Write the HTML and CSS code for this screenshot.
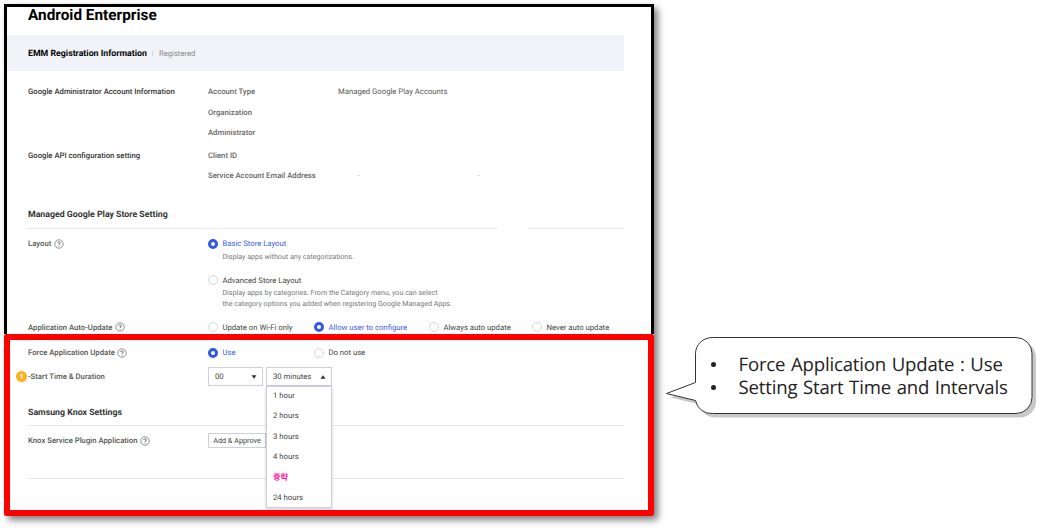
FILE: index.html
```html
<!DOCTYPE html>
<html lang="en">
<head>
<meta charset="utf-8">
<title>Android Enterprise</title>
<link rel="stylesheet" href="styles.css">
</head>
<body>
<svg width="0" height="0" class="defs" aria-hidden="true">
  <symbol id="help" viewBox="0 0 10 10">
    <circle cx="5" cy="5" r="4.2" fill="none" stroke="#666" stroke-width=".7"/>
    <path d="M3.7 4.1C3.7 2.4 6.3 2.4 6.3 4C6.3 4.9 5 4.9 5 6M5 6.8V7.6" fill="none" stroke="#555" stroke-width=".9"/>
  </symbol>
</svg>
<main class="page">
  <div class="panel">
    <section class="top">
      <h1>Android Enterprise</h1>
      <div class="band"><b>EMM Registration Information</b><i></i><span>Registered</span></div>
      <div class="row info first"><div class="label dark">Google Administrator Account Information</div><div class="sub">Account Type</div><div class="value">Managed Google Play Accounts</div></div>
      <div class="row info"><div class="label"></div><div class="sub">Organization</div></div>
      <div class="row info"><div class="label"></div><div class="sub">Administrator</div></div>
      <div class="row info api"><div class="label dark">Google API configuration setting</div><div class="sub">Client ID</div></div>
      <div class="row info"><div class="label"></div><div class="sub">Service Account Email Address</div><div class="marks"><i></i><i></i></div></div>
      <h2 class="store">Managed Google Play Store Setting</h2>
      <div class="rule split"><i></i><i></i></div>
      <div class="row layout">
        <div class="label">Layout<svg class="help"><use href="#help"/></svg></div>
        <div class="options">
          <div class="radio on"><i></i><span>Basic Store Layout</span></div>
          <p>Display apps without any categorizations.</p>
          <div class="radio advanced"><i></i><span>Advanced Store Layout</span></div>
          <p>Display apps by categories. From the Category menu, you can select<br>the category options you added when registering Google Managed Apps.</p>
        </div>
      </div>
      <div class="row auto">
        <div class="label">Application Auto-Update<svg class="help"><use href="#help"/></svg></div>
        <div class="radios">
          <div class="radio"><i></i><span>Update on Wi-Fi only</span></div>
          <div class="radio on"><i></i><span>Allow user to configure</span></div>
          <div class="radio"><i></i><span>Always auto update</span></div>
          <div class="radio"><i></i><span>Never auto update</span></div>
        </div>
      </div>
    </section>
    <section class="bottom">
      <div class="row force">
        <div class="label">Force Application Update<svg class="help"><use href="#help"/></svg></div>
        <div class="radios">
          <div class="radio on"><i></i><span>Use</span></div>
          <div class="radio"><i></i><span>Do not use</span></div>
        </div>
      </div>
      <div class="row start">
        <div class="label"><b class="badge">1</b>-Start Time &amp; Duration</div>
        <div class="select hour"><span>00</span><svg viewBox="0 0 6 4"><path d="M.5 .3H5.5L3 3.7Z"/></svg></div>
        <div class="select minutes"><span>30 minutes</span><svg viewBox="0 0 6 4"><path d="M.5 3.7H5.5L3 .3Z"/></svg>
          <ul class="menu"><li>1 hour</li><li>2 hours</li><li>3 hours</li><li>4 hours</li><li class="skip">중략</li><li class="last">24 hours</li></ul>
        </div>
      </div>
      <h2 class="knox">Samsung Knox Settings</h2>
      <div class="rule"><i></i></div>
      <div class="row plugin">
        <div class="label">Knox Service Plugin Application<svg class="help"><use href="#help"/></svg></div>
        <button>Add &amp; Approve</button>
      </div>
      <div class="rule"><i></i></div>
    </section>
  </div>
  <aside class="callout">
    <svg class="bubble" viewBox="0 0 374 84">
      <path class="shadow" transform="translate(4 4)" d="M46.5 .5H350A16 16 0 0 1 366 16.5V60.5A16 16 0 0 1 350 76.5H46.5A16 16 0 0 1 29.5 63.5L.5 56.5L29.5 45.5V16.5A17 16 0 0 1 46.5 .5Z"/>
      <path class="face" d="M46.5 .5H350A16 16 0 0 1 366 16.5V60.5A16 16 0 0 1 350 76.5H46.5A16 16 0 0 1 29.5 63.5L.5 56.5L29.5 45.5V16.5A17 16 0 0 1 46.5 .5Z"/>
    </svg>
    <ul><li>Force Application Update : Use</li><li>Setting Start Time and Intervals</li></ul>
  </aside>
</main>
</body>
</html>
```
FILE: styles.css
```css
* { box-sizing: border-box; }
body { margin: 0; background: #fff; font-family: Roboto, "Noto Sans CJK KR", sans-serif; font-size: 7.73px; color: #555; overflow: hidden; text-rendering: geometricPrecision; }
h1, h2, p, ul { margin: 0; padding: 0; }
ul { list-style: none; }
.defs { position: absolute; }
.page { display: flex; align-items: flex-start; width: 1038px; height: 529px; padding: 4px 0 0 4px; }

/* Settings panel */
.panel { width: 650px; height: 512px; flex: none; background: #fff; border-radius: 2px; box-shadow: 4px 4px 7px rgba(0,0,0,.5); }
.top { height: 330px; border: 3px solid #000; border-bottom: 0; overflow: hidden; white-space: nowrap; }
h1 { height: 28px; padding-left: 21px; font-size: 15.35px; line-height: 16px; font-weight: 700; color: #000; }
.band { display: flex; align-items: center; height: 36px; width: 617px; padding-left: 21px; background: #f2f3f8; font-size: 7.7px; color: #888; }
.band b { padding-top: 1px; font-size: 8.78px; font-weight: 700; color: #000; }
.band i { width: 1px; height: 5px; margin: 0 5.5px; background: #d5d6dc; }
.row { display: flex; align-items: center; padding-left: 21px; }
.label { display: flex; align-items: center; flex: none; width: 180px; font-weight: 500; }
.dark { color: #333; }
.help { width: 10px; height: 10px; margin-left: 2.5px; }
.info { height: 20.4px; }
.info.first { margin-top: 10.5px; }
.info.api { margin-top: 2.5px; }
.sub { width: 130px; font-weight: 500; color: #666; }
.marks { display: flex; gap: 117px; padding-left: 19px; }
.marks i { width: 3px; height: 1px; background: #e2e2e2; }
h2 { height: 14px; padding: 1px 0 0 21px; font-size: 8.78px; line-height: 14px; font-weight: 700; color: #333; }
.store { margin-top: 21px; }
.rule { display: flex; height: 1px; margin: 0 27px 0 21px; }
.rule i { flex: 1; background: #e8e8ea; }
.store + .rule { margin-top: 7px; }
.split { gap: 31px; }
.split i:first-child { flex: 0 0 469px; }
.layout { align-items: flex-start; padding-top: 9px; }
.layout .label { height: 12px; }
.radio { display: flex; align-items: center; height: 12px; color: #444; }
.radio > i { width: 10px; height: 10px; flex: none; margin-right: 4.4px; border: 1px solid #d4d6de; border-radius: 50%; }
.on { color: #3960e8; }
.on > i { border: 3px solid #3059e4; }
.options p { margin-top: 1px; padding-left: 14.4px; font-size: 7.13px; line-height: 11px; color: #777; }
.options .advanced { margin-top: 12.5px; }
.auto { margin-top: 12px; height: 12px; }
.radios { display: flex; }
.radios .radio:nth-child(1) { width: 106px; }
.radios .radio:nth-child(2) { width: 115px; }
.radios .radio:nth-child(3) { width: 103px; }

/* Highlighted settings */
.bottom { height: 182px; border: 6px solid #f00; border-radius: 2px; white-space: nowrap; }
.bottom .row, .bottom h2 { padding-left: 18px; }
.bottom .rule { margin: 0 24px 0 18px; }
.force { height: 25px; }
.start { height: 23px; }
.badge { display: flex; align-items: center; justify-content: center; width: 11px; height: 11px; margin-left: -12px; margin-right: 1px; border-radius: 50%; background: #ffb01e; color: #fff; font-size: 7px; }
.select { display: flex; align-items: center; justify-content: space-between; height: 19px; padding: 0 5px 0 6px; border: 1px solid #cfcfdc; color: #444; }
.select svg { width: 6px; height: 4px; fill: #333; }
.hour { width: 55px; margin-right: 3px; }
.minutes { position: relative; width: 66px; }
.menu { position: absolute; z-index: 2; left: -1px; top: 18px; width: 66px; height: 122px; background: #fff; border: 1px solid #cfcfdc; box-shadow: 0 1px 3px rgba(0,0,0,.2); }
.menu li { height: 20.3px; padding-left: 6px; line-height: 18.8px; }
.menu .skip { color: #ff1a9c; font-size: 8.2px; font-weight: 700; line-height: 20px; }
.menu .last { line-height: 20px; }
.bottom .knox { margin-top: 17px; }
.bottom .knox + .rule { margin-top: 6px; }
.plugin { height: 29px; margin-bottom: 23px; }
button { width: 58px; height: 15px; padding: 0; border: 1px solid #cfcfdc; background: #fff; font: 7.25px Roboto, sans-serif; color: #444; }

/* Speech bubble */
.callout { position: relative; flex: none; width: 374px; height: 84px; margin: 333px 0 0 12px; }
.bubble { position: absolute; left: 0; top: 0; width: 374px; height: 84px; overflow: visible; }
.shadow { fill: #c8c8c8; }
.face { fill: #fff; stroke: #333; }
.callout ul { position: relative; padding: 16px 0 0 44.5px; font: 18.6px/23px "Open Sans", sans-serif; letter-spacing: -.18px; word-spacing: 1px; color: #222; white-space: nowrap; }
.callout li { display: flex; align-items: center; }
.callout li::before { content: ""; width: 5px; height: 5px; margin-right: 23px; border-radius: 50%; background: #222; }
```
